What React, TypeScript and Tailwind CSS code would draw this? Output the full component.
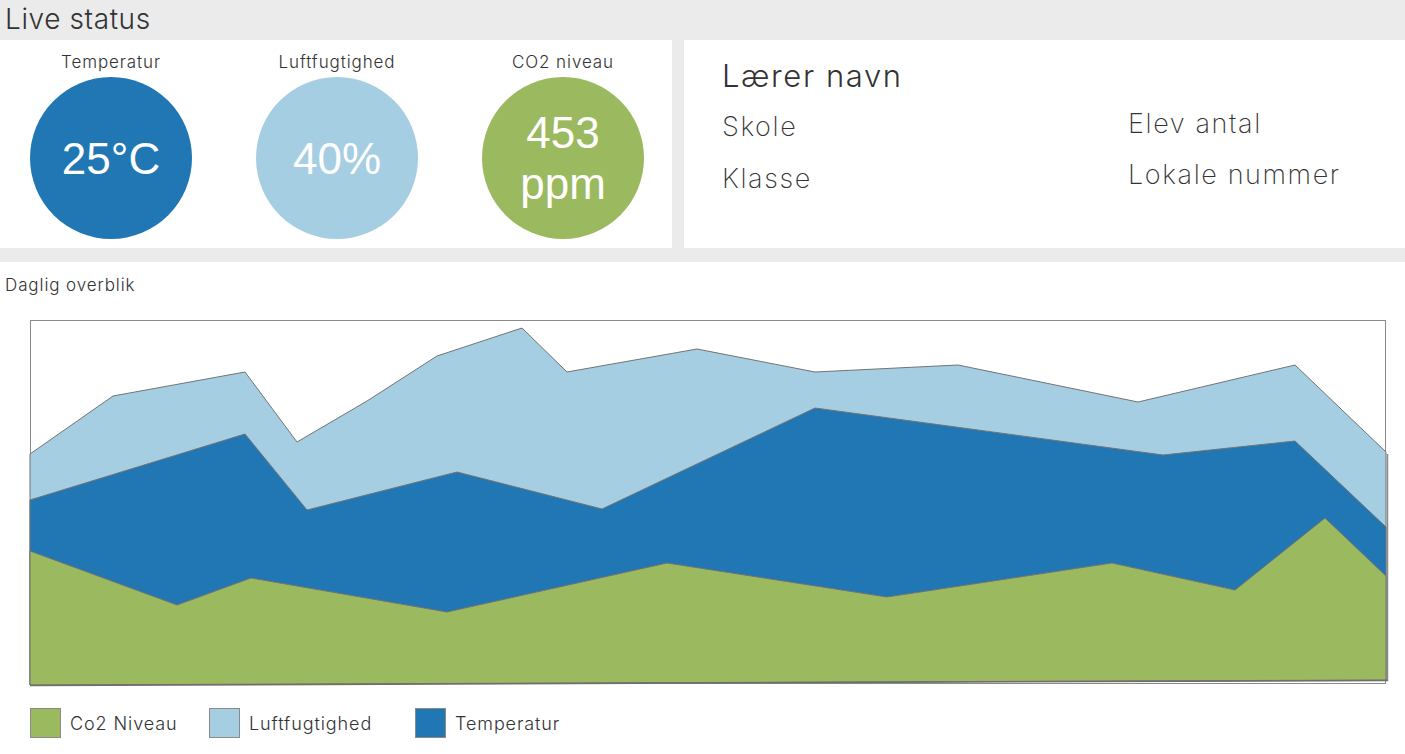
import React from 'react';

const sans = { fontFamily: 'Inter, "Open Sans", sans-serif' };
const arial = { fontFamily: '"Liberation Sans", Arial, sans-serif' };

interface Gauge {
  label: string;
  value: string[];
  color: string;
}

const gauges: Gauge[] = [
  { label: 'Temperatur', value: ['25°C'], color: 'bg-[#2077b4]' },
  { label: 'Luftfugtighed', value: ['40%'], color: 'bg-[#a6cee3]' },
  { label: 'CO2 niveau', value: ['453', 'ppm'], color: 'bg-[#9bb95e]' },
];

// stacked area lines, in page coordinates
const lightTop = [
  [30, 454], [113, 396], [245, 372], [297, 442], [367, 401], [437, 356], [522, 328],
  [567, 372], [697, 349], [815, 372], [958, 365], [1138, 402], [1295, 365], [1386, 452],
];
const darkTop = [
  [30, 500], [245, 434], [307, 510], [457, 472], [602, 509], [815, 408], [1163, 455],
  [1295, 441], [1386, 527],
];
const greenTop = [
  [30, 551], [177, 605], [251, 578], [447, 612], [667, 563], [887, 597], [1112, 563],
  [1235, 590], [1325, 518], [1386, 576],
];

const toArea = (pts: number[][]) =>
  [...pts.map((p) => p.join(',')), '1386,680', '30,685'].join(' ');

const legend = [
  { label: 'Co2 Niveau', color: 'bg-[#9bb95e]' },
  { label: 'Luftfugtighed', color: 'bg-[#a6cee3]' },
  { label: 'Temperatur', color: 'bg-[#2077b4]' },
];

export default function App() {
  return (
    <div className="w-[1405px] h-[754px] bg-white text-[#333] overflow-hidden" style={sans}>
      {/* Live status */}
      <div className="bg-[#ebebeb] pb-[14px]">
        <div className="h-[40px] pl-[5px] flex items-center">
          <h1 className="text-[28px] font-light leading-none -mt-[3px] tracking-[0.6px]">Live status</h1>
        </div>
        <div className="flex gap-[12px] h-[208px]">
          <div className="w-[672px] bg-white flex pl-[30px] gap-[64px]">
            {gauges.map((g) => (
              <div key={g.label} className="flex flex-col items-center w-[162px]">
                <div className="mt-[11px] h-[22px] leading-[22px] text-[17px] font-light tracking-[0.9px] whitespace-nowrap">
                  {g.label}
                </div>
                <div
                  className={`mt-[4px] w-[162px] h-[162px] rounded-full ${g.color} flex flex-col items-center justify-center text-white`}
                  style={arial}
                >
                  {g.value.map((v) => (
                    <span key={v} className="text-[44px] leading-[51px]">
                      {v}
                    </span>
                  ))}
                </div>
              </div>
            ))}
          </div>
          <div className="flex-1 bg-white pl-[38px] pt-[16px]">
            <div className="text-[31px] font-light leading-[40px] tracking-[1.6px]">Lærer navn</div>
            <div className="grid grid-cols-[406px_1fr] text-[27px] font-extralight tracking-[1.6px]">
              <div className="flex flex-col">
                <span className="leading-[52px] mt-[5px]">Skole</span>
                <span className="leading-[52px]">Klasse</span>
              </div>
              <div className="flex flex-col">
                <span className="leading-[51px] mt-[2px]">Elev antal</span>
                <span className="leading-[51px]">Lokale nummer</span>
              </div>
            </div>
          </div>
        </div>
      </div>

      {/* Daglig overblik */}
      <div className="h-[50px] pl-[5px] pt-[11px]">
        <div className="text-[17px] leading-[24px] font-light tracking-[0.9px]">Daglig overblik</div>
      </div>
      <svg width="1405" height="380" viewBox="0 312 1405 380" className="block">
        <rect x="30.5" y="320.5" width="1355" height="363" fill="white" stroke="#8a8a8a" strokeWidth="1" />
        <polygon points={toArea(lightTop)} fill="#a6cee3" stroke="#737373" strokeWidth="1" strokeLinejoin="round" />
        <polygon points={toArea(darkTop)} fill="#2077b4" stroke="#737373" strokeWidth="1" strokeLinejoin="round" />
        <polygon points={toArea(greenTop)} fill="#9bb95e" stroke="#737373" strokeWidth="1" strokeLinejoin="round" />
        <line x1="1387.5" y1="454" x2="1387.5" y2="681" stroke="#8a8a8a" strokeWidth="1.5" />
        <line x1="30" y1="685.5" x2="1388" y2="680.5" stroke="#6f6f6f" strokeWidth="1.5" />
      </svg>

      {/* Legend */}
      <div className="flex items-center pl-[30px] mt-[15px] h-[32px]">
        {legend.map((l, i) => (
          <div
            key={l.label}
            className={`flex items-center gap-[9px] ${i === 0 ? 'w-[179px]' : i === 1 ? 'w-[206px]' : ''}`}
          >
            <span className={`w-[31px] h-[30px] ${l.color} border border-[#8a8a8a]`} />
            <span className="text-[18px] font-light leading-none tracking-[0.9px] mt-[2px]">{l.label}</span>
          </div>
        ))}
      </div>
    </div>
  );
}
